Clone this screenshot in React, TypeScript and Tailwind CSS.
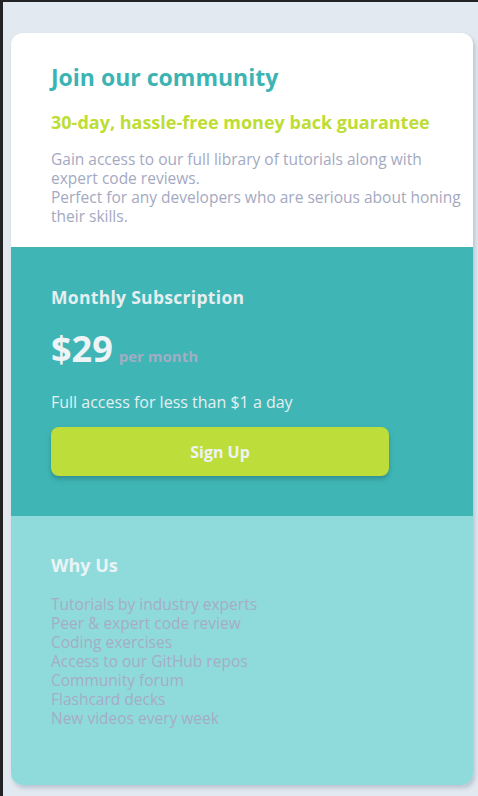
const features = [
  'Tutorials by industry experts',
  'Peer & expert code review',
  'Coding exercises',
  'Access to our GitHub repos',
  'Community forum',
  'Flashcard decks',
  'New videos every week',
];

export default function App() {
  return (
    <div className="min-h-[796px] bg-[#e3e9f0] border-t-2 border-l-[3px] border-[#222326] font-['Open_Sans',sans-serif]">
      <div className="pl-[8px] pr-[5px] pt-[31px] pb-[12px]">
        <div className="w-[462px] rounded-[12px] overflow-hidden shadow-[2px_3px_4px_rgba(60,80,110,0.25)]">
          <section className="bg-white pl-[40px] pr-[6px] pt-[28px] pb-[21px]">
            <h1 className="text-[23px] font-bold text-[#3bb4b3] leading-[32px]">Join our community</h1>
            <h2 className="mt-[17px] text-[18px] font-bold text-[#bedd34] leading-[24px]">
              30-day, hassle-free money back guarantee
            </h2>
            <p className="mt-[16px] text-[15.5px] leading-[19px] text-[#a4a9c1]">
              Gain access to our full library of tutorials along with expert code reviews.
              <br />
              Perfect for any developers who are serious about honing their skills.
            </p>
          </section>

          <section className="bg-[#3fb6b5] pl-[40px] pt-[38px] pb-[40px]">
            <h3 className="text-[17.5px] font-bold text-[#e6eef2] leading-[24px] tracking-[0.3px]">Monthly Subscription</h3>
            <div className="mt-[20px] flex items-baseline gap-[6px]">
              <span className="text-[36px] font-bold text-[#eef3f5] leading-[40px]">$29</span>
              <span className="text-[15px] font-bold text-[#a2adc3]">per month</span>
            </div>
            <p className="mt-[23px] text-[16px] text-[#e6eef2] leading-[20px]">Full access for less than $1 a day</p>
            <button className="mt-[15px] w-[338px] h-[49px] rounded-[8px] bg-[#bcdd3a] text-[16px] font-bold text-[#eef3f5] shadow-[0_3px_5px_rgba(30,70,80,0.35)]">
              Sign Up
            </button>
          </section>

          <section className="bg-[#8fdbdb] pl-[40px] pt-[37px] pb-[57px]">
            <h3 className="text-[18px] font-bold text-[#eaf4f6] leading-[24px]">Why Us</h3>
            <ul className="mt-[18px] text-[15.5px] leading-[19px] text-[#a6acc6]">
              {features.map((f) => (
                <li key={f}>{f}</li>
              ))}
            </ul>
          </section>
        </div>
      </div>
    </div>
  );
}
